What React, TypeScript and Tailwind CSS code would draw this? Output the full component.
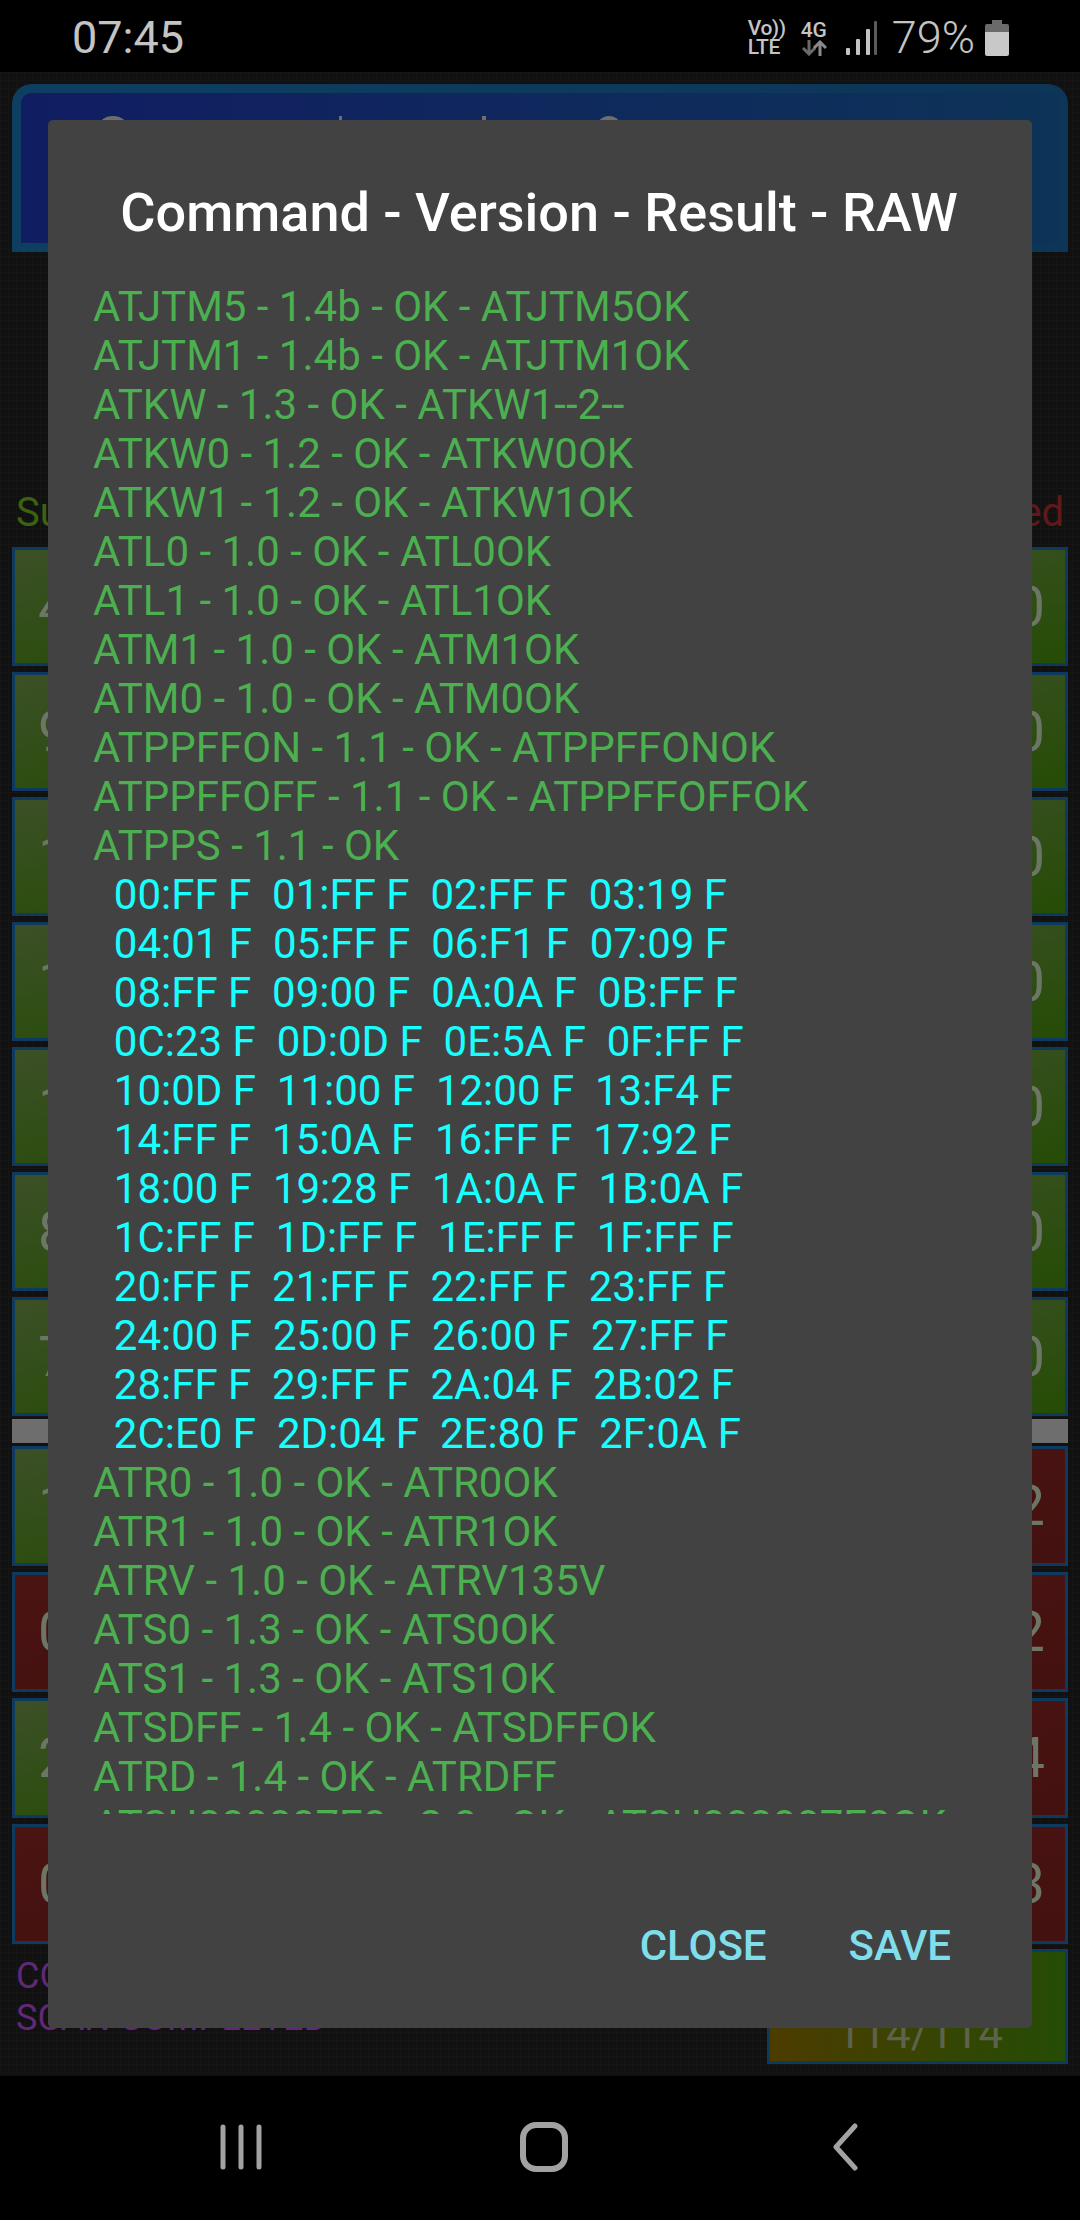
import React from "react";

const GREEN_TILE = "bg-[linear-gradient(165deg,#3c5027,#254c05)]";
const RED_TILE = "bg-[linear-gradient(165deg,#4a1412,#431110)]";

const lines: { text: string; hex?: boolean }[] = [
  { text: "ATJTM5 - 1.4b - OK - ATJTM5OK" },
  { text: "ATJTM1 - 1.4b - OK - ATJTM1OK" },
  { text: "ATKW - 1.3 - OK - ATKW1--2--" },
  { text: "ATKW0 - 1.2 - OK - ATKW0OK" },
  { text: "ATKW1 - 1.2 - OK - ATKW1OK" },
  { text: "ATL0 - 1.0 - OK - ATL0OK" },
  { text: "ATL1 - 1.0 - OK - ATL1OK" },
  { text: "ATM1 - 1.0 - OK - ATM1OK" },
  { text: "ATM0 - 1.0 - OK - ATM0OK" },
  { text: "ATPPFFON - 1.1 - OK - ATPPFFONOK" },
  { text: "ATPPFFOFF - 1.1 - OK - ATPPFFOFFOK" },
  { text: "ATPPS - 1.1 - OK" },
  { text: "  00:FF F  01:FF F  02:FF F  03:19 F", hex: true },
  { text: "  04:01 F  05:FF F  06:F1 F  07:09 F", hex: true },
  { text: "  08:FF F  09:00 F  0A:0A F  0B:FF F", hex: true },
  { text: "  0C:23 F  0D:0D F  0E:5A F  0F:FF F", hex: true },
  { text: "  10:0D F  11:00 F  12:00 F  13:F4 F", hex: true },
  { text: "  14:FF F  15:0A F  16:FF F  17:92 F", hex: true },
  { text: "  18:00 F  19:28 F  1A:0A F  1B:0A F", hex: true },
  { text: "  1C:FF F  1D:FF F  1E:FF F  1F:FF F", hex: true },
  { text: "  20:FF F  21:FF F  22:FF F  23:FF F", hex: true },
  { text: "  24:00 F  25:00 F  26:00 F  27:FF F", hex: true },
  { text: "  28:FF F  29:FF F  2A:04 F  2B:02 F", hex: true },
  { text: "  2C:E0 F  2D:04 F  2E:80 F  2F:0A F", hex: true },
  { text: "ATR0 - 1.0 - OK - ATR0OK" },
  { text: "ATR1 - 1.0 - OK - ATR1OK" },
  { text: "ATRV - 1.0 - OK - ATRV135V" },
  { text: "ATS0 - 1.3 - OK - ATS0OK" },
  { text: "ATS1 - 1.3 - OK - ATS1OK" },
  { text: "ATSDFF - 1.4 - OK - ATSDFFOK" },
  { text: "ATRD - 1.4 - OK - ATRDFF" },
  { text: "ATSH000007E0 - 2.0 - OK - ATSH000007E0OK" },
];

const topRows = [
  ["4", "0"],
  ["9", "0"],
  ["1", "0"],
  ["1", "0"],
  ["1", "0"],
  ["8", "0"],
  ["7", "0"],
];

const bottomRows = [
  { left: "1", right: "2", ok: true },
  { left: "0", right: "2", ok: false },
  { left: "2", right: "4", ok: true },
  { left: "0", right: "3", ok: false },
];

function Tile({ value, tone, h, align }: { value: string; tone: string; h: string; align: "left" | "right" }) {
  return (
    <div
      className={`${tone} ${h} w-[240px] border-[3px] border-[#0e3a60] flex items-center pl-[23px] pr-[20px] text-[56px] text-[#6c7566] ${
        align === "right" ? "justify-end" : "justify-start"
      }`}
    >
      {value}
    </div>
  );
}

function StatusBar() {
  return (
    <div className="h-[72px] bg-black flex items-center pt-[3px] pl-[72px] pr-[71px] text-[#c4c4c4]">
      <span className="text-[45px] leading-none">07:45</span>
      <div className="ml-auto flex items-center">
        <div className="flex flex-col text-[21px] leading-[19px] font-medium tracking-[-0.5px] w-[52px] mt-[1px]">
          <span>Vo))</span>
          <span>LTE</span>
        </div>
        <div className="flex flex-col items-center w-[28px] mr-[18px] mt-[1px]">
          <span className="text-[21px] leading-[20px] font-medium">4G</span>
          <svg width="26" height="16" viewBox="0 0 26 16" fill="none" strokeWidth="3">
            <path d="M8 0v14M2 8l6 6 6-6" stroke="#6a6a6a" />
            <path d="M19 16V2M13 8l6-6 6 6" stroke="#8a8a8a" />
          </svg>
        </div>
        <svg width="32" height="36" viewBox="0 0 32 36" className="mr-[14px]">
          <rect x="0" y="28" width="4" height="7" rx="1" fill="#c4c4c4" />
          <rect x="10" y="19" width="4" height="16" rx="1" fill="#c4c4c4" />
          <rect x="20" y="9" width="4" height="26" rx="1" fill="#c4c4c4" />
          <rect x="28" y="1" width="3" height="34" rx="1" fill="#5a5a5a" />
        </svg>
        <span className="text-[45px] leading-none font-light">79%</span>
        <svg width="24" height="36" viewBox="0 0 24 36" className="ml-[10px]">
          <path d="M7 0h10v4h5a2 2 0 0 1 2 2v6H0V6a2 2 0 0 1 2-2h5z" fill="#6a6a6a" />
          <path d="M0 12h24v22a2 2 0 0 1-2 2H2a2 2 0 0 1-2-2z" fill="#c8c8c8" />
        </svg>
      </div>
    </div>
  );
}

function NavBar() {
  return (
    <div className="h-[144px] bg-black flex items-start pt-[47px] pl-[218px]">
      <svg width="46" height="48" viewBox="0 0 46 48" fill="none" stroke="#a2a2a2" strokeWidth="5" strokeLinecap="round">
        <path d="M5 4v40M23 4v40M41 4v40" />
      </svg>
      <svg width="54" height="52" viewBox="0 0 54 52" fill="none" className="ml-[253px] -mt-[2px]">
        <rect x="6" y="4" width="42" height="44" rx="13" stroke="#a2a2a2" strokeWidth="6" />
      </svg>
      <svg width="32" height="48" viewBox="0 0 32 48" fill="none" className="ml-[258px]">
        <path d="M26 3 7 24l19 21" stroke="#a2a2a2" strokeWidth="5" strokeLinecap="round" strokeLinejoin="round" />
      </svg>
    </div>
  );
}

function Dialog() {
  return (
    <div className="absolute left-[48px] top-[120px] w-[984px] h-[1908px] bg-[#424242] rounded-[5px] flex flex-col">
      <h1 className="text-white text-[54px] leading-[60px] font-medium text-center mt-[63px] pr-[2px]">
        Command - Version - Result - RAW
      </h1>
      <div className="mt-[39px] ml-[45px] mr-[40px] h-[1532px] overflow-hidden">
        {lines.map((line) => (
          <div
            key={line.text}
            className={`text-[42px] leading-[49px] whitespace-pre ${line.hex ? "text-[#18ffff]" : "text-[#4caf50]"}`}
          >
            {line.text}
          </div>
        ))}
      </div>
      <div className="flex justify-end gap-[82px] pr-[81px] mt-[108px] text-[42px] leading-[48px] font-medium text-[#80deea]">
        <span>CLOSE</span>
        <span>SAVE</span>
      </div>
    </div>
  );
}

export default function App() {
  return (
    <div className="relative w-[1080px] h-[2220px] bg-black overflow-hidden font-['Roboto',sans-serif]">
      <StatusBar />

      <main className="h-[2004px] bg-[#111111] bg-[linear-gradient(#151515_1px,transparent_1px),linear-gradient(90deg,#151515_1px,transparent_1px)] bg-[size:8px_8px] px-3 pt-3">
        <div className="h-[168px] rounded-t-[20px] bg-[linear-gradient(90deg,#0e3f60,#0c3558)] pt-[9px] px-[9px] pb-[9px]">
          <div className="h-[150px] rounded-t-[10px] bg-[linear-gradient(90deg,#111d62,#0d3358)] flex items-start pt-[23px] pl-[74px]">
            <div className="w-[36px] h-[36px] rounded-full bg-[#6e6e6e]" />
            <div className="w-[3px] h-[10px] ml-[208px] bg-[#6e6e6e]" />
            <div className="w-[4px] h-[10px] ml-[140px] bg-[#6e6e6e]" />
            <div className="w-[26px] h-[26px] ml-[110px] rounded-full bg-[#6e6e6e]" />
          </div>
        </div>

        <div className="mt-[237px] h-[47px] flex justify-between px-1 text-[40px] leading-[47px]">
          <span className="text-[#3a6210]">Supported</span>
          <span className="text-[#621818]">Unsupported</span>
        </div>

        <div className="mt-[11px] flex flex-col gap-[6px]">
          {topRows.map((row, i) => (
            <div key={i} className="flex justify-between">
              <Tile value={row[0]} tone={GREEN_TILE} h="h-[119px]" align="left" />
              <Tile value={row[1]} tone={GREEN_TILE} h="h-[119px]" align="right" />
            </div>
          ))}
        </div>

        <div className="mt-[3px] h-[24px] bg-[#6e6e6e]" />

        <div className="mt-[3px] flex flex-col gap-[6px]">
          {bottomRows.map((row, i) => (
            <div key={i} className="flex justify-between">
              <Tile value={row.left} tone={row.ok ? GREEN_TILE : RED_TILE} h="h-[120px]" align="left" />
              <Tile value={row.right} tone={RED_TILE} h="h-[120px]" align="right" />
            </div>
          ))}
        </div>

        <div className="mt-[5px] flex justify-between items-start">
          <div className="pl-1 pt-[6px] text-[36px] leading-[42px] text-[#622878]">
            <div>CONNECTED</div>
            <div>SCAN COMPLETED</div>
          </div>
          <div className="w-[301px] h-[115px] border-[3px] border-[#0e3a60] bg-[linear-gradient(90deg,#4c3c00,#254c05)] flex items-end justify-end pr-[62px] text-[44px] leading-[56px] text-[#5e624c]">
            114/114
          </div>
        </div>
      </main>

      <NavBar />
      <Dialog />
    </div>
  );
}
